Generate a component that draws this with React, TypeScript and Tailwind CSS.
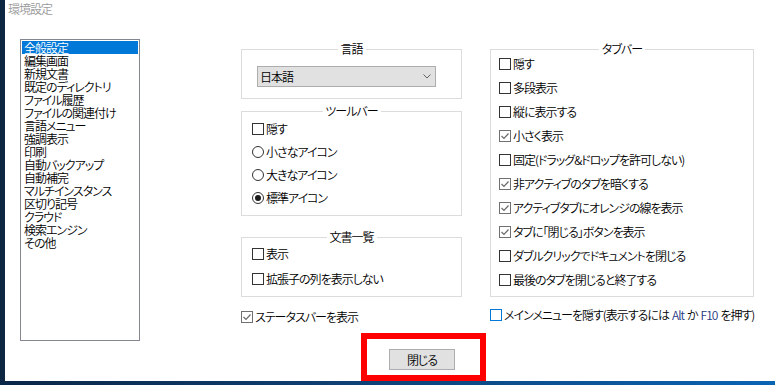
import React from "react";

const items = [
  "全般設定",
  "編集画面",
  "新規文書",
  "既定のディレクトリ",
  "ファイル履歴",
  "ファイルの関連付け",
  "言語メニュー",
  "強調表示",
  "印刷",
  "自動バックアップ",
  "自動補完",
  "マルチインスタンス",
  "区切り記号",
  "クラウド",
  "検索エンジン",
  "その他",
];

function Box({ checked, blue }: { checked?: boolean; blue?: boolean }) {
  const border = blue
    ? "border-[#0078d7]"
    : checked
    ? "border-[#707070]"
    : "border-[#333333]";
  return (
    <span
      className={`relative box-border w-[12px] h-[12px] border bg-white shrink-0 ${border}`}
    >
      {checked && (
        <svg
          className="absolute left-0 top-0"
          viewBox="0 0 10 10"
          width="10"
          height="10"
        >
          <polyline
            points="1.5,5 4,7.5 8.5,2.5"
            fill="none"
            stroke="#6a6a6a"
            strokeWidth="1.2"
          />
        </svg>
      )}
    </span>
  );
}

function Radio({ checked }: { checked?: boolean }) {
  return (
    <span className="flex items-center justify-center box-border w-[12px] h-[12px] rounded-full border border-[#333333] bg-white shrink-0">
      {checked && <span className="w-[6px] h-[6px] rounded-full bg-[#1a1a1a]" />}
    </span>
  );
}

function Group({
  title,
  className,
  children,
}: {
  title: string;
  className: string;
  children?: React.ReactNode;
}) {
  return (
    <div className={`relative box-border border border-[#dcdcdc] ${className}`}>
      <span className="absolute left-1/2 -translate-x-1/2 -top-[8px] bg-white px-[3px] leading-[14px] whitespace-nowrap">
        {title}
      </span>
      {children}
    </div>
  );
}

function CheckRow({
  label,
  checked,
  h,
}: {
  label: React.ReactNode;
  checked?: boolean;
  h: string;
}) {
  return (
    <div className={`flex items-center gap-[2px] leading-[14px] whitespace-nowrap ${h}`}>
      <Box checked={checked} />
      <span>{label}</span>
    </div>
  );
}

function RadioRow({ label, checked }: { label: string; checked?: boolean }) {
  return (
    <div className="flex items-center gap-[2px] leading-[14px] whitespace-nowrap h-[23px]">
      <Radio checked={checked} />
      <span>{label}</span>
    </div>
  );
}

export default function App() {
  return (
    <div className="w-[775px] h-[385px] flex flex-col overflow-hidden text-[12px] text-black font-[350] tracking-[-1px] font-['Noto_Sans_CJK_JP',sans-serif] [font-feature-settings:'palt']">
      <div className="flex h-[381px]">
        <div className="w-[5px] bg-[#0d2642]" />
        <div className="flex-1 bg-white flex flex-col">
          <div className="h-[39px] pl-[3px] pt-[1px] text-[#9a9a9a] leading-[16px]">
            環境設定
          </div>
          <div className="flex">
            <div className="ml-[15px] w-[120px] h-[302px] box-border border border-[#828790] p-[1px] leading-[13px]">
              {items.map((t, i) => (
                <div
                  key={t}
                  className={`h-[13px] pl-[2px] whitespace-nowrap ${
                    i === 0 ? "bg-[#0078d7] text-white" : ""
                  }`}
                >
                  {t}
                </div>
              ))}
            </div>

            <div className="ml-[101px] flex flex-col">
              <div className="flex h-[294px]">
                {/* middle column */}
                <div className="w-[221px] pt-[10px] flex flex-col">
                  <Group title="言語" className="h-[50px]">
                    <div className="ml-[15px] mt-[16px] w-[179px] h-[21px] box-border border border-[#adadad] bg-[#e1e1e1] flex items-center justify-between pl-[2px] pr-[4px] leading-[14px]">
                      <span>日本語</span>
                      <svg width="8" height="5" viewBox="0 0 8 5">
                        <polyline
                          points="0.5,0.5 4,4 7.5,0.5"
                          fill="none"
                          stroke="#606060"
                          strokeWidth="1"
                        />
                      </svg>
                    </div>
                  </Group>
                  <Group title="ツールバー" className="mt-[12px] h-[105px] pt-[5px] pl-[10px]">
                    <CheckRow label="隠す" h="h-[23px]" />
                    <RadioRow label="小さなアイコン" />
                    <RadioRow label="大きなアイコン" />
                    <RadioRow label="標準アイコン" checked />
                  </Group>
                  <Group title="文書一覧" className="mt-[21px] h-[60px] pt-[3px] pl-[10px]">
                    <CheckRow label="表示" h="h-[25px]" />
                    <CheckRow label="拡張子の列を表示しない" h="h-[25px]" />
                  </Group>
                  <div className="mt-[13px]">
                    <CheckRow label="ステータスバーを表示" checked h="h-[14px]" />
                  </div>
                </div>

                {/* right column */}
                <div className="ml-[28px] w-[264px] pt-[10px] flex flex-col">
                  <Group title="タブバー" className="h-[248px] pt-[2px] pl-[8px]">
                    <CheckRow label="隠す" h="h-[24px]" />
                    <CheckRow label="多段表示" h="h-[24px]" />
                    <CheckRow label="縦に表示する" h="h-[24px]" />
                    <CheckRow label="小さく表示" checked h="h-[24px]" />
                    <CheckRow label="固定(ドラッグ&ドロップを許可しない)" h="h-[24px]" />
                    <CheckRow label="非アクティブのタブを暗くする" checked h="h-[24px]" />
                    <CheckRow label="アクティブタブにオレンジの線を表示" checked h="h-[24px]" />
                    <CheckRow label="タブに「閉じる」ボタンを表示" checked h="h-[24px]" />
                    <CheckRow label="ダブルクリックでドキュメントを閉じる" h="h-[24px]" />
                    <CheckRow label="最後のタブを閉じると終了する" h="h-[24px]" />
                  </Group>
                  <div className="mt-[11px] flex items-center gap-[2px] h-[14px] leading-[14px] whitespace-nowrap">
                    <Box blue />
                    <span className="flex">
                      <span>メインメニューを隠す(表示するには</span>
                      <span className="ml-[3px] text-[#1f3a80]">Alt</span>
                      <span className="ml-[3px]">か</span>
                      <span className="ml-[3px] text-[#1f3a80]">F10</span>
                      <span className="ml-[3px]">を押す)</span>
                    </span>
                  </div>
                </div>
              </div>

              <div className="ml-[120px] w-[125px] h-[48px] box-border border-[6px] border-[#ff0000] pl-[22px] pt-[10px]">
                <div className="w-[66px] h-[21px] box-border border border-[#adadad] bg-[#e1e1e1] flex items-center justify-center leading-[14px]">
                  閉じる
                </div>
              </div>
            </div>
          </div>
        </div>
      </div>
      <div className="h-[4px] bg-linear-to-r from-[#0b2646] to-[#0a64b4]" />
    </div>
  );
}
